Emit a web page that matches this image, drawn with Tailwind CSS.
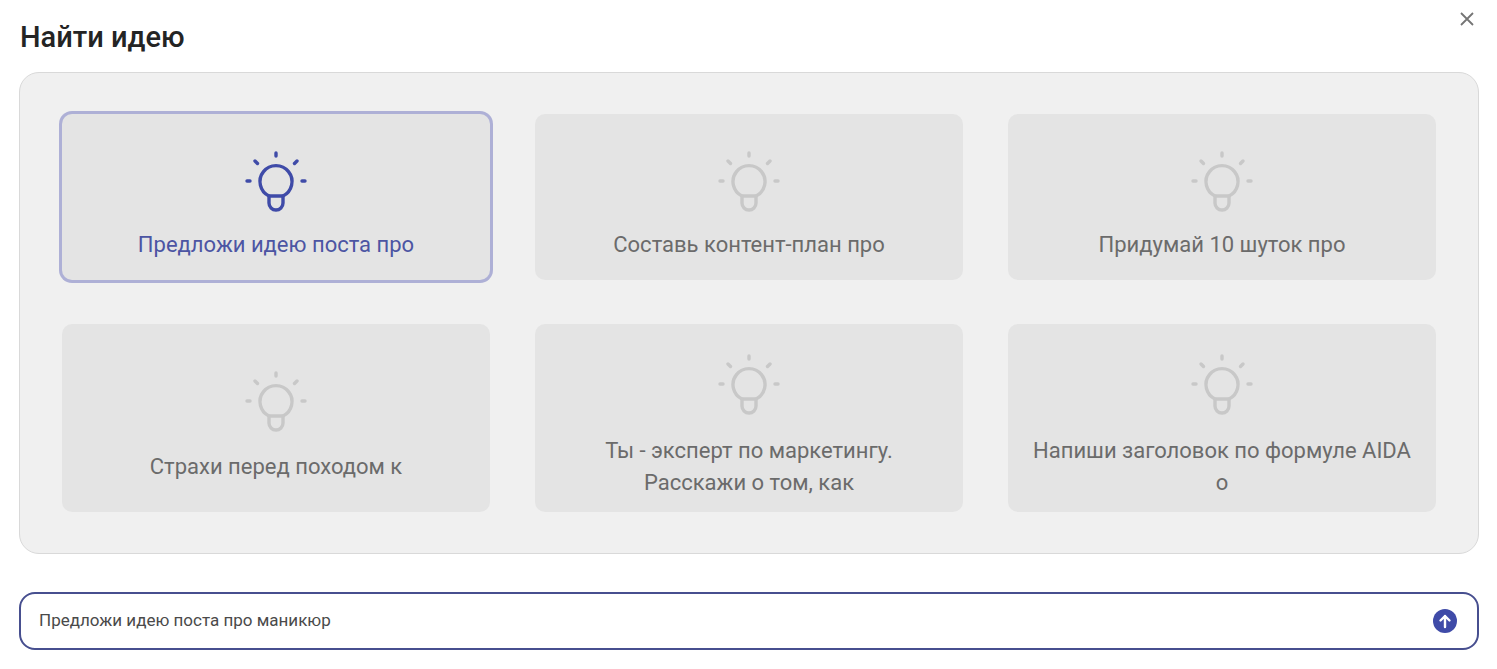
<!DOCTYPE html>
<html lang="ru">
<head>
    <meta charset="UTF-8"/>
    <meta name="viewport" content="width=device-width, initial-scale=1.0"/>
    <script src="https://cdn.jsdelivr.net/npm/@tailwindcss/browser@4"></script>
    <title>Найти идею</title>
</head>
<body class="h-screen bg-white overflow-hidden font-['Roboto',sans-serif]">
<main class="relative h-full px-[19px] pr-[18px]">
    <!-- Close -->
    <button class="absolute top-[11px] right-[22px] w-4 h-4 text-[#757575]">
        <svg viewBox="0 0 16 16" class="w-4 h-4" fill="none" stroke="currentColor" stroke-width="1.8"><path d="M2 2l12 12M14 2L2 14"/></svg>
    </button>
    <h1 class="pt-[19px] pl-px h-[72px] text-[29px] leading-[36px] font-medium text-[#242424]">Найти идею</h1>

    <!-- Ideas -->
    <section class="h-[482px] bg-[#f0f0f0] border border-[#d9d9d9] rounded-[20px] pt-[41px] px-[42px]">
        <div class="grid grid-cols-3 gap-x-[45px] gap-y-[44px] grid-rows-[166px_188px]">
            <div class="bg-[#e4e4e4] rounded-[10px] ring-3 ring-[#aeb0d6] flex flex-col items-center text-center pt-[36px] text-[#4c55a3]">
                <svg viewBox="0 0 64 64" class="w-16 h-16 text-[#3f4ba8]" fill="none" stroke="currentColor" stroke-width="3.4" stroke-linecap="round"><path d="M32 3v3M11 11l2.500 2.500M53 11l-2.500 2.500M3 31h3M58 31h3"/><path d="M25 46a16 16 0 1 1 14 0z"/><path d="M25 46v7a7 7 0 0 0 14 0v-7"/></svg>
                <p class="mt-[15px] text-[22px] leading-[32px]">Предложи идею поста про</p>
            </div>
            <div class="bg-[#e4e4e4] rounded-[10px] flex flex-col items-center text-center pt-[36px] text-[#6b6b6b]">
                <svg viewBox="0 0 64 64" class="w-16 h-16 text-[#c8c8c8]" fill="none" stroke="currentColor" stroke-width="3.4" stroke-linecap="round"><path d="M32 3v3M11 11l2.500 2.500M53 11l-2.500 2.500M3 31h3M58 31h3"/><path d="M25 46a16 16 0 1 1 14 0z"/><path d="M25 46v7a7 7 0 0 0 14 0v-7"/></svg>
                <p class="mt-[15px] text-[22px] leading-[32px]">Составь контент-план про</p>
            </div>
            <div class="bg-[#e4e4e4] rounded-[10px] flex flex-col items-center text-center pt-[36px] text-[#6b6b6b]">
                <svg viewBox="0 0 64 64" class="w-16 h-16 text-[#c8c8c8]" fill="none" stroke="currentColor" stroke-width="3.4" stroke-linecap="round"><path d="M32 3v3M11 11l2.500 2.500M53 11l-2.500 2.500M3 31h3M58 31h3"/><path d="M25 46a16 16 0 1 1 14 0z"/><path d="M25 46v7a7 7 0 0 0 14 0v-7"/></svg>
                <p class="mt-[15px] text-[22px] leading-[32px]">Придумай 10 шуток про</p>
            </div>
            <div class="bg-[#e4e4e4] rounded-[10px] flex flex-col items-center text-center pt-[46px] text-[#6b6b6b]">
                <svg viewBox="0 0 64 64" class="w-16 h-16 text-[#c8c8c8]" fill="none" stroke="currentColor" stroke-width="3.4" stroke-linecap="round"><path d="M32 3v3M11 11l2.500 2.500M53 11l-2.500 2.500M3 31h3M58 31h3"/><path d="M25 46a16 16 0 1 1 14 0z"/><path d="M25 46v7a7 7 0 0 0 14 0v-7"/></svg>
                <p class="mt-[17px] text-[22px] leading-[32px]">Страхи перед походом к</p>
            </div>
            <div class="bg-[#e4e4e4] rounded-[10px] flex flex-col items-center text-center pt-[29px] text-[#6b6b6b]">
                <svg viewBox="0 0 64 64" class="w-16 h-16 text-[#c8c8c8]" fill="none" stroke="currentColor" stroke-width="3.4" stroke-linecap="round"><path d="M32 3v3M11 11l2.500 2.500M53 11l-2.500 2.500M3 31h3M58 31h3"/><path d="M25 46a16 16 0 1 1 14 0z"/><path d="M25 46v7a7 7 0 0 0 14 0v-7"/></svg>
                <p class="mt-[18px] text-[22px] leading-[32px]">Ты - эксперт по маркетингу.<br>Расскажи о том, как</p>
            </div>
            <div class="bg-[#e4e4e4] rounded-[10px] flex flex-col items-center text-center pt-[29px] text-[#6b6b6b]">
                <svg viewBox="0 0 64 64" class="w-16 h-16 text-[#c8c8c8]" fill="none" stroke="currentColor" stroke-width="3.4" stroke-linecap="round"><path d="M32 3v3M11 11l2.500 2.500M53 11l-2.500 2.500M3 31h3M58 31h3"/><path d="M25 46a16 16 0 1 1 14 0z"/><path d="M25 46v7a7 7 0 0 0 14 0v-7"/></svg>
                <p class="mt-[18px] text-[22px] leading-[32px]">Напиши заголовок по формуле AIDA<br>о</p>
            </div>
        </div>
    </section>

    <!-- Prompt -->
    <form class="mt-[38px] h-[58px] border-2 border-[#474f8f] rounded-[16px] flex items-center justify-between pl-[18px] pr-[20px] bg-white">
        <span class="text-[17px] text-[#4a4a4a]">Предложи идею поста про маникюр</span>
        <button type="button" class="w-6 h-6 rounded-full bg-[#3f4ba8] text-white flex items-center justify-center">
            <svg viewBox="0 0 24 24" class="w-6 h-6" fill="none" stroke="currentColor" stroke-width="2.4" stroke-linecap="round" stroke-linejoin="round"><path d="M12 18V7M7.500 11.500L12 7l4.500 4.500"/></svg>
        </button>
    </form>
</main>
</body>
</html>
